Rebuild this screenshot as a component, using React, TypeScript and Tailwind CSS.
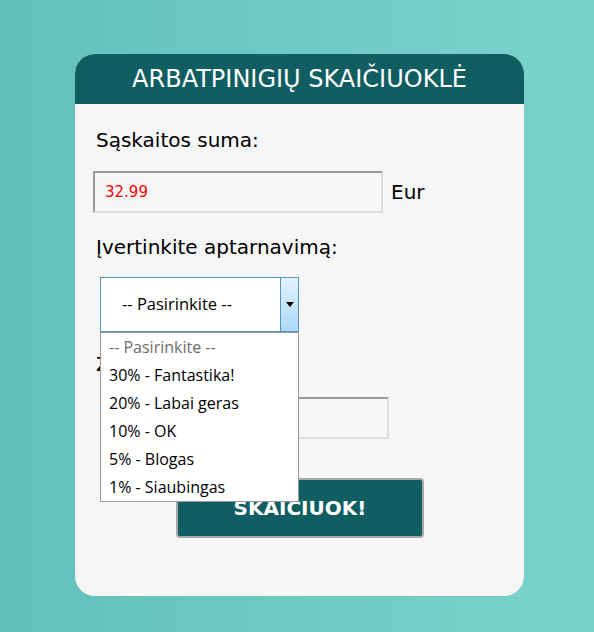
import { useState } from 'react'

const options = [
  '30% - Fantastika!',
  '20% - Labai geras',
  '10% - OK',
  '5% - Blogas',
  '1% - Siaubingas',
]

export default function App() {
  const [amount, setAmount] = useState('32.99')

  return (
    <div className="min-h-[632px] w-full bg-gradient-to-r from-[#62bfba] to-[#7bd4cc] pt-[54px] [font-family:'DejaVu_Sans',sans-serif]">
      <div className="ml-[75px] h-[542px] w-[449px] overflow-hidden rounded-[20px] bg-[#f6f6f6]">
        {/* Header */}
        <div className="flex h-[50px] items-center justify-center bg-[#115e62] text-[24px] text-white">
          ARBATPINIGIŲ SKAIČIUOKLĖ
        </div>

        {/* Body */}
        <div className="px-[18px] pt-[24px] text-black">
          <p className="pl-[3px] text-[20px] leading-[24px]">Sąskaitos suma:</p>

          <div className="mt-[19px] flex items-center">
            <input
              value={amount}
              onChange={e => setAmount(e.target.value)}
              className="h-[42px] w-[290px] border-2 border-t-[#999] border-l-[#999] border-r-[#ddd] border-b-[#ddd] bg-[#f6f6f6] px-[10px] text-[15px] text-[#ff0000] outline-none"
            />
            <span className="ml-[8px] text-[20px]">Eur</span>
          </div>

          <p className="mt-[22px] pl-[3px] text-[20px] leading-[24px]">Įvertinkite aptarnavimą:</p>

          <div className="relative mt-[18px]">
            <div className="ml-[7px] flex h-[55px] w-[199px] border border-[#5b93c4] bg-white">
              <div className="flex flex-1 items-center pl-[21px] [font-family:'Open_Sans',sans-serif] text-[16.5px]">
                -- Pasirinkite --
              </div>
              <div className="flex w-[18px] items-center justify-center border-l border-[#5b93c4] bg-gradient-to-b from-[#e3f2fd] to-[#acdaf7]">
                <svg width="8" height="5" viewBox="0 0 8 5">
                  <path d="M0 0h8L4 5z" fill="#000" />
                </svg>
              </div>
            </div>

            <p className="mt-[20px] pl-[3px] text-[20px] leading-[24px]">Žmonių skaičius:</p>

            <div className="mt-[21px] pl-[8px]">
              <div className="h-[42px] w-[288px] border-2 border-t-[#999] border-l-[#999] border-r-[#ddd] border-b-[#ddd] bg-[#f6f6f6]" />
            </div>

            <div className="mt-[39px] flex pl-[83px]">
              <button className="h-[60px] w-[248px] rounded-[4px] border-2 border-[#a9a9a9] bg-[#115e62] text-[20px] font-bold text-white">
                SKAICIUOK!
              </button>
            </div>

            {/* Open dropdown list */}
            <ul className="absolute left-[7px] top-[55px] w-[199px] border border-[#999] bg-white [font-family:'Open_Sans',sans-serif] text-[16px] text-black">
              <li className="flex h-[28px] items-center pl-[8px] text-[#6d6d6d]">-- Pasirinkite --</li>
              {options.map(o => (
                <li key={o} className="flex h-[28px] items-center pl-[8px]">
                  {o}
                </li>
              ))}
            </ul>
          </div>
        </div>
      </div>
    </div>
  )
}
